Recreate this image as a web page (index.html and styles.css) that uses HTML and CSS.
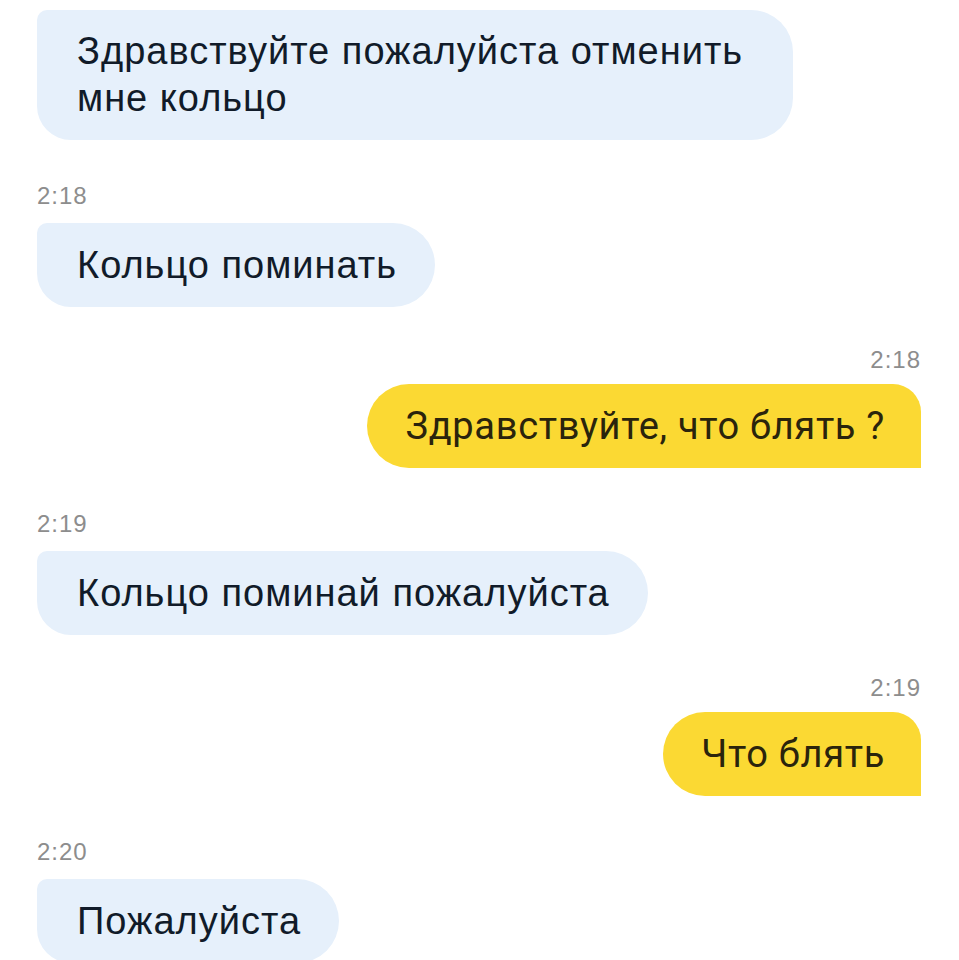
FILE: index.html
```html
<!DOCTYPE html>
<html lang="ru">
<head>
<meta charset="utf-8">
<title>Чат</title>
<link rel="stylesheet" href="styles.css">
</head>
<body>
<main class="chat">
  <div class="bubble in first">Здравствуйте пожалуйста отменить мне кольцо</div>

  <div class="time left">2:18</div>
  <div class="bubble in">Кольцо поминать</div>

  <div class="time right">2:18</div>
  <div class="bubble out">Здравствуйте, что блять ?</div>

  <div class="time left">2:19</div>
  <div class="bubble in">Кольцо поминай пожалуйста</div>

  <div class="time right">2:19</div>
  <div class="bubble out">Что блять</div>

  <div class="time left">2:20</div>
  <div class="bubble in">Пожалуйста</div>
</main>
</body>
</html>
```

FILE: styles.css
```css
html, body {
  margin: 0;
  padding: 0;
  background: #ffffff;
  overflow: hidden;
}

.chat {
  display: flex;
  flex-direction: column;
  padding: 10px 38px 0 37px;
  height: 950px;
}

.bubble {
  box-sizing: border-box;
  padding: 18.5px 38px 18.5px 40px;
  font-size: 38px;
  line-height: 47px;
}

.bubble.in {
  align-self: flex-start;
  max-width: 756px;
  background: #e6f0fb;
  color: #111b29;
  font-family: "Liberation Sans", Arial, sans-serif;
  letter-spacing: 1px;
  border-radius: 10px 42px 42px 34px;
}

.bubble.in.first {
  padding-top: 18px;
  padding-bottom: 18px;
}

.bubble.out {
  align-self: flex-end;
  background: #fbd933;
  color: #2a240c;
  font-family: Roboto, "Liberation Sans", sans-serif;
  font-size: 38px;
  letter-spacing: 0.7px;
  padding: 18.5px 36px 18.5px 38px;
  border-radius: 42px 28px 0 42px;
}

.time {
  font-family: "Liberation Sans", Arial, sans-serif;
  font-size: 24px;
  line-height: 24px;
  letter-spacing: 1px;
  color: #8d8d8d;
}

.time.left {
  align-self: flex-start;
  margin: 44px 0 15px;
}

.time.right {
  align-self: flex-end;
  margin: 41px 0 12px;
}
```
